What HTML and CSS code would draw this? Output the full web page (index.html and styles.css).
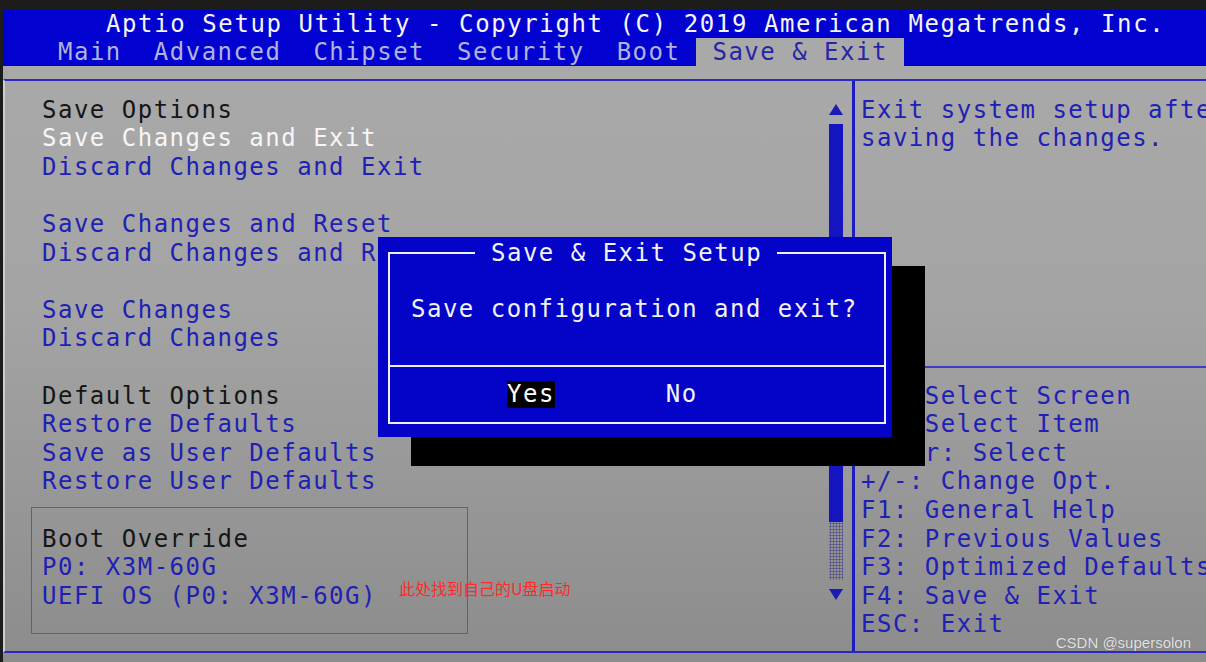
FILE: index.html
```html
<!DOCTYPE html>
<html lang="en">
<head>
    <meta charset="UTF-8">
    <meta name="viewport" content="width=device-width, initial-scale=1.0">
    <title>Aptio Setup Utility - Save &amp; Exit</title>
    <link rel="stylesheet" href="styles.css">
</head>
<body>
    <div class="screen">
        <header class="topbar">
            <div class="title">Aptio Setup Utility - Copyright (C) 2019 American Megatrends, Inc.</div>
            <nav class="tabs">
                <span class="tab">Main</span>
                <span class="tab">Advanced</span>
                <span class="tab">Chipset</span>
                <span class="tab">Security</span>
                <span class="tab">Boot</span>
                <span class="tab active">Save &amp; Exit</span>
            </nav>
        </header>

        <main class="panel">
            <section class="menu">
                <div class="row heading">Save Options</div>
                <div class="row selected">Save Changes and Exit</div>
                <div class="row">Discard Changes and Exit</div>
                <div class="row"></div>
                <div class="row">Save Changes and Reset</div>
                <div class="row">Discard Changes and Reset</div>
                <div class="row"></div>
                <div class="row">Save Changes</div>
                <div class="row">Discard Changes</div>
                <div class="row"></div>
                <div class="row heading">Default Options</div>
                <div class="row">Restore Defaults</div>
                <div class="row">Save as User Defaults</div>
                <div class="row">Restore User Defaults</div>
                <div class="row"></div>
                <div class="row heading">Boot Override</div>
                <div class="row">P0: X3M-60G</div>
                <div class="row">UEFI OS (P0: X3M-60G)</div>
            </section>

            <div class="scroll">
                <div class="arrow">
                    <svg width="14" height="11" viewBox="0 0 14 11"><polygon points="7,0 14,11 0,11" fill="#1a1ab4"/></svg>
                </div>
                <div class="thumb"></div>
                <div class="track"></div>
                <div class="arrow">
                    <svg width="14" height="11" viewBox="0 0 14 11"><polygon points="0,0 14,0 7,11" fill="#1a1ab4"/></svg>
                </div>
            </div>

            <aside class="help">
                <div class="row">Exit system setup after</div>
                <div class="row">saving the changes.</div>
                <div class="gap"></div>
                <div class="rule"></div>
                <div class="row">&rarr;&larr;: Select Screen</div>
                <div class="row">&uarr;&darr;: Select Item</div>
                <div class="row">Enter: Select</div>
                <div class="row">+/-: Change Opt.</div>
                <div class="row">F1: General Help</div>
                <div class="row">F2: Previous Values</div>
                <div class="row">F3: Optimized Defaults</div>
                <div class="row">F4: Save &amp; Exit</div>
                <div class="row">ESC: Exit</div>
            </aside>
        </main>

        <div class="dialog">
            <div class="frame">
                <div class="frame-title"><span>Save &amp; Exit Setup</span></div>
                <div class="message">Save configuration and exit?</div>
                <div class="buttons">
                    <span class="btn focus">Yes</span>
                    <span class="btn">No</span>
                </div>
            </div>
        </div>

        <div class="mark">
            <span class="mark-note">此处找到自己的U盘启动</span>
        </div>

        <div class="watermark">CSDN @supersolon</div>
    </div>
</body>
</html>
```

FILE: styles.css
```css
body {
    margin: 0;
    padding: 10px 0 0 3px;
    background: #1c1c1a;
    overflow: hidden;
}

.screen {
    position: relative;
    height: 652px;
    overflow: hidden;
    background: linear-gradient(to bottom, #aaaaaa 0%, #a4a4a4 45%, #8c8c8c 100%);
    font-family: 'DejaVu Sans Mono', 'Liberation Mono', monospace;
    font-size: 24px;
    letter-spacing: 1.5px;
    color: #2020b4;
    white-space: nowrap;
}

/* header */
.topbar {
    background: #0202d0;
    height: 56px;
}

.title {
    height: 28px;
    line-height: 28px;
    padding-left: 103px;
    letter-spacing: 1.6px;
    color: #f4f4f4;
}

.tabs {
    display: flex;
    height: 28px;
    line-height: 28px;
    padding-left: 39px;
}

.tab {
    padding: 0 16px;
    color: #b0b4dc;
}

.tab.active {
    background: #a9a9a9;
    color: #2626a6;
}

/* main panel */
.panel {
    display: flex;
    margin-top: 13px;
    height: 570px;
    border-top: 2px solid #2a2ac2;
    border-bottom: 2px solid #2a2ac2;
    border-left: 2px solid #cdcdcd;
}

.row {
    height: 28.6px;
    line-height: 28.6px;
}

.menu {
    flex: 1;
    padding: 14.7px 0 0 37px;
}

.menu .heading {
    color: #161616;
}

.menu .selected {
    color: #f6f6f6;
}

.scroll {
    width: 16px;
    margin-right: 8px;
    padding-top: 14.7px;
}

.scroll .arrow {
    height: 28.6px;
    display: flex;
    align-items: center;
    justify-content: center;
}

.scroll .thumb {
    height: 398px;
    margin: 0 1px;
    background: #1414c0;
}

.scroll .track {
    height: 58px;
    margin: 0 1px;
    background-image: radial-gradient(#4a4a8a 45%, transparent 50%);
    background-size: 3px 3px;
}

.help {
    flex: none;
    width: 345px;
    border-left: 3px solid #1c1cc0;
    padding: 14.7px 0 0 6px;
    overflow: hidden;
}

.help .gap {
    height: 200.2px;
}

.help .rule {
    height: 2px;
    margin: 13px 0 13.6px -6px;
    background: #3c3cc6;
}

/* dialog */
.dialog {
    position: absolute;
    left: 375px;
    top: 227px;
    width: 514px;
    height: 200px;
    box-sizing: border-box;
    padding: 15px 6px 13px 10px;
    background: #0404c8;
    box-shadow: 33px 29px 0 #000;
    color: #f2f2f2;
}

.frame {
    position: relative;
    height: 100%;
    box-sizing: border-box;
    border: 2px solid #eeeeee;
    display: flex;
    flex-direction: column;
}

.frame-title {
    position: absolute;
    top: -15.3px;
    left: 85px;
    line-height: 28.6px;
}

.frame-title span {
    padding: 0 15px 0 16px;
    background: #0404c8;
}

.message {
    height: 111px;
    line-height: 111px;
    padding-left: 21px;
}

.buttons {
    flex: 1;
    display: flex;
    align-items: center;
    gap: 111px;
    padding-left: 117px;
    border-top: 2px solid #eeeeee;
}

.btn {
    height: 27px;
    line-height: 27px;
}

.btn.focus {
    background: #000;
    color: #ffffff;
}

/* annotation */
.mark {
    position: absolute;
    left: 28px;
    top: 497px;
    width: 435px;
    height: 125px;
    border: 1px solid #ff2020;
}

.mark-note {
    position: absolute;
    left: 367px;
    top: 70px;
    font-family: 'Noto Sans CJK SC', sans-serif;
    font-size: 16px;
    line-height: 20px;
    letter-spacing: 0;
    color: #ff2a2a;
}

.watermark {
    position: absolute;
    right: 15px;
    top: 623px;
    font-family: 'Liberation Sans', Arial, sans-serif;
    font-size: 15px;
    line-height: 20px;
    letter-spacing: 0;
    color: rgba(255, 255, 255, 0.82);
    text-shadow: 0 0 1px rgba(0, 0, 0, 0.3);
}
```
